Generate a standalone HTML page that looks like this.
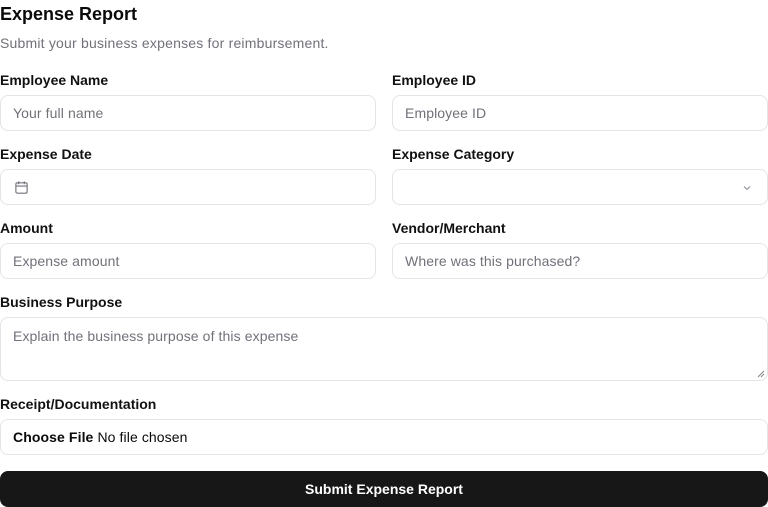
<!DOCTYPE html>
<html><head><style>
*{box-sizing:border-box;margin:0;padding:0}
body{width:768px;height:507px;background:#fff;font-family:"Liberation Sans",Arial,sans-serif;color:#0a0a0a;position:relative;overflow:hidden}
.a{position:absolute}
.t{left:0;top:3px;font-size:18px;font-weight:bold;line-height:22px}
.s{left:0;top:35px;font-size:14px;color:#71717a;line-height:17px;letter-spacing:0.2px}
.l{font-size:14px;font-weight:bold;line-height:17px;color:#111}
.i{border:1px solid #e4e4e7;border-radius:8px;height:36px;font-size:14px;color:#71717a;padding:0 12px;line-height:34px;background:#fff;letter-spacing:0.1px}
.L{left:0;width:376px}.R{left:392px;width:376px}
</style></head><body>
<div class="a t">Expense Report</div>
<div class="a s">Submit your business expenses for reimbursement.</div>

<div class="a l" style="left:0;top:72px">Employee Name</div>
<div class="a l" style="left:392px;top:72px">Employee ID</div>
<div class="a i L" style="top:95px">Your full name</div>
<div class="a i R" style="top:95px">Employee ID</div>

<div class="a l" style="left:0;top:146px">Expense Date</div>
<div class="a l" style="left:392px;top:146px">Expense Category</div>
<div class="a i L" style="top:169px"><svg width="15" height="15" viewBox="0 0 16 16" style="position:absolute;left:13px;top:10px" fill="none" stroke="#71717a" stroke-width="1.2"><rect x="2" y="3" width="12" height="11" rx="1.5"/><path d="M2 6.5h12M5 1.5v3M11 1.5v3"/></svg></div>
<div class="a i R" style="top:169px"><svg width="12" height="12" viewBox="0 0 12 12" style="position:absolute;right:14px;top:12px" fill="none" stroke="#a1a1aa" stroke-width="1.3"><path d="M3 4.5l3 3 3-3"/></svg></div>

<div class="a l" style="left:0;top:220px">Amount</div>
<div class="a l" style="left:392px;top:220px">Vendor/Merchant</div>
<div class="a i L" style="top:243px">Expense amount</div>
<div class="a i R" style="top:243px">Where was this purchased?</div>

<div class="a l" style="left:0;top:294px">Business Purpose</div>
<div class="a i" style="left:0;width:768px;top:317px;height:64px;line-height:17px;padding-top:10px">Explain the business purpose of this expense
<svg width="8" height="8" viewBox="0 0 8 8" style="position:absolute;right:2px;bottom:2px" stroke="#888" stroke-width="1"><path d="M1 7L7 1M4 7L7 4"/></svg></div>

<div class="a l" style="left:0;top:396px">Receipt/Documentation</div>
<div class="a i" style="left:0;width:768px;top:419px;color:#0a0a0a"><b>Choose File</b> No file chosen</div>

<div class="a" style="left:0;top:471px;width:768px;height:36px;background:#171717;border-radius:8px;color:#fff;font-size:14px;font-weight:bold;text-align:center;line-height:36px">Submit Expense Report</div>
</body></html>
